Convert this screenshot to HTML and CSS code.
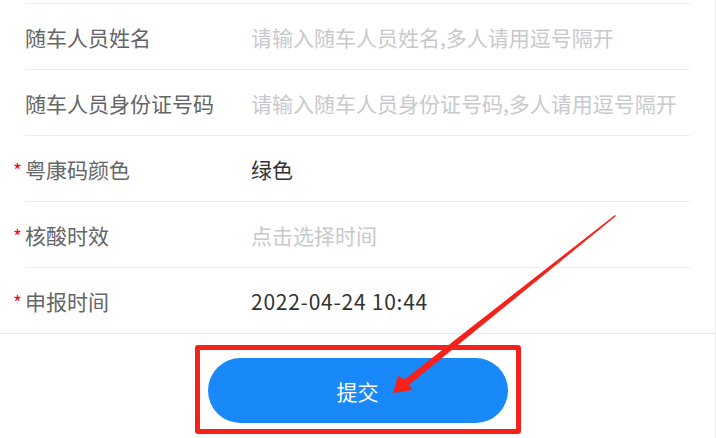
FILE: index.html
```html
<!DOCTYPE html>
<html lang="zh-CN">
<head>
    <meta charset="UTF-8">
    <meta name="viewport" content="width=device-width, initial-scale=1.0">
    <title>申报</title>
    <link rel="stylesheet" href="styles.css">
</head>
<body>
    <div class="page">
        <div class="form">
            <div class="field">
                <label class="field-label" for="name">随车人员姓名</label>
                <input class="field-input" id="name" type="text" placeholder="请输入随车人员姓名,多人请用逗号隔开">
            </div>
            <div class="field">
                <label class="field-label" for="idcard">随车人员身份证号码</label>
                <input class="field-input" id="idcard" type="text" placeholder="请输入随车人员身份证号码,多人请用逗号隔开">
            </div>
            <div class="field required">
                <span class="field-label">粤康码颜色</span>
                <span class="field-value">绿色</span>
            </div>
            <div class="field required">
                <span class="field-label">核酸时效</span>
                <span class="field-value placeholder">点击选择时间</span>
            </div>
            <div class="field required">
                <span class="field-label">申报时间</span>
                <span class="field-value date">2022-04-24 10:44</span>
            </div>
        </div>

        <div class="footer">
            <button class="submit-btn" type="button">提交</button>
            <div class="mark-box"></div>
        </div>

        <svg class="mark-arrow" width="716" height="438" viewBox="0 0 716 438">
            <polygon points="615,214.9 616,216.1 409.2,384.7 413,390 393,393 398,376 404.8,379.3" fill="#f5221b"/>
        </svg>
    </div>
</body>
</html>
```

FILE: styles.css
```css
* {
    box-sizing: border-box;
}
html, body {
    margin: 0;
    padding: 0;
    background: #fff;
}
body {
    font-family: "Noto Sans CJK SC", "Liberation Sans", sans-serif;
    font-size: 21px;
    color: #323233;
}
.page {
    position: relative;
    width: 716px;
    height: 438px;
    overflow: hidden;
    border-right: 1px solid #eeeeee;
}
.form {
    padding: 3px 25px 0;
}
.field {
    position: relative;
    display: flex;
    align-items: center;
    height: 66px;
    border-top: 1px solid #ebedf0;
}
.field-label {
    width: 226px;
    flex-shrink: 0;
    color: #646566;
}
.required .field-label::before {
    content: "*";
    position: absolute;
    left: -12px;
    top: 24px;
    color: #ee0a24;
    font-size: 19px;
    line-height: 1;
}
.field-value {
    color: #323233;
}
.date {
    letter-spacing: 0.75px;
}
.field-input {
    flex: 1;
    border: 0;
    outline: none;
    padding: 0;
    margin: 0;
    font: inherit;
    color: #323233;
    background: transparent;
}
.field-input::placeholder,
.placeholder {
    color: #c8c9cc;
}
.footer {
    position: relative;
    display: flex;
    justify-content: center;
    padding-top: 24px;
    border-top: 1px solid #e8e8e8;
}
.submit-btn {
    width: 300px;
    height: 65px;
    border: 0;
    border-radius: 33px;
    background: #1989fa;
    color: #fff;
    font: inherit;
    font-size: 21px;
}
.mark-box {
    position: absolute;
    left: 195px;
    top: 11px;
    width: 326px;
    height: 89px;
    border: 5px solid #f5221b;
    border-radius: 3px;
}
.mark-arrow {
    position: absolute;
    left: 0;
    top: 0;
    pointer-events: none;
}
```
